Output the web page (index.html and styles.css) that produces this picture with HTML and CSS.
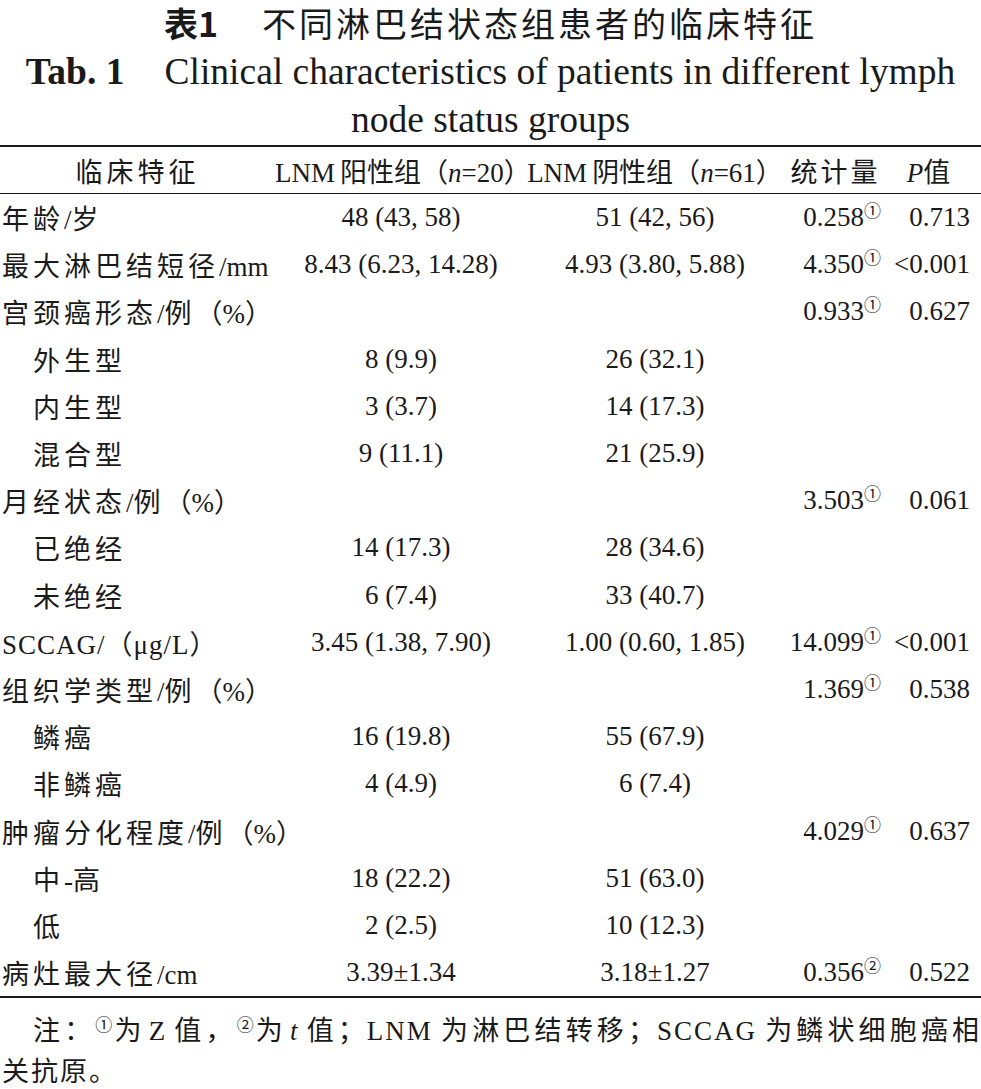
FILE: index.html
```html
<!DOCTYPE html>
<html lang="zh">
<head>
<meta charset="utf-8">
<title>表1 不同淋巴结状态组患者的临床特征</title>
<link rel="stylesheet" href="styles.css">
</head>
<body>
<div class="page">
  <div class="title-cn"><span class="tno">表1</span><span class="tcn">不同淋巴结状态组患者的临床特征</span></div>
  <div class="title-en"><b>Tab. 1</b><span class="ten">Clinical characteristics of patients in different lymph<br>node status groups</span></div>
  <table class="data">
    <colgroup>
      <col class="c1"><col class="c2"><col class="c3"><col class="c4"><col class="c5">
    </colgroup>
    <thead>
      <tr>
        <th class="h1">临床特征</th>
        <th class="hg"><span class="lt">LNM</span>阳性组（<i>n</i>=20）</th>
        <th class="hg"><span class="lt">LNM</span>阴性组（<i>n</i>=61）</th>
        <th class="hs">统计量</th>
        <th class="hp"><i>P</i>值</th>
      </tr>
    </thead>
    <tbody>
      <tr><td>年龄<span class="lt">/</span>岁</td><td>48 (43, 58)</td><td>51 (42, 56)</td><td>0.258<sup>①</sup></td><td>0.713</td></tr>
      <tr><td>最大淋巴结短径<span class="lt">/mm</span></td><td>8.43 (6.23, 14.28)</td><td>4.93 (3.80, 5.88)</td><td>4.350<sup>①</sup></td><td>&lt;0.001</td></tr>
      <tr><td>宫颈癌形态<span class="lt">/</span>例<span class="lt">（%）</span></td><td></td><td></td><td>0.933<sup>①</sup></td><td>0.627</td></tr>
      <tr><td class="sub">外生型</td><td>8 (9.9)</td><td>26 (32.1)</td><td></td><td></td></tr>
      <tr><td class="sub">内生型</td><td>3 (3.7)</td><td>14 (17.3)</td><td></td><td></td></tr>
      <tr><td class="sub">混合型</td><td>9 (11.1)</td><td>21 (25.9)</td><td></td><td></td></tr>
      <tr><td>月经状态<span class="lt">/</span>例<span class="lt">（%）</span></td><td></td><td></td><td>3.503<sup>①</sup></td><td>0.061</td></tr>
      <tr><td class="sub">已绝经</td><td>14 (17.3)</td><td>28 (34.6)</td><td></td><td></td></tr>
      <tr><td class="sub">未绝经</td><td>6 (7.4)</td><td>33 (40.7)</td><td></td><td></td></tr>
      <tr><td><span class="lt wide">SCCAG/（μg/L）</span></td><td>3.45 (1.38, 7.90)</td><td>1.00 (0.60, 1.85)</td><td>14.099<sup>①</sup></td><td>&lt;0.001</td></tr>
      <tr><td>组织学类型<span class="lt">/</span>例<span class="lt">（%）</span></td><td></td><td></td><td>1.369<sup>①</sup></td><td>0.538</td></tr>
      <tr><td class="sub">鳞癌</td><td>16 (19.8)</td><td>55 (67.9)</td><td></td><td></td></tr>
      <tr><td class="sub">非鳞癌</td><td>4 (4.9)</td><td>6 (7.4)</td><td></td><td></td></tr>
      <tr><td>肿瘤分化程度<span class="lt">/</span>例<span class="lt">（%）</span></td><td></td><td></td><td>4.029<sup>①</sup></td><td>0.637</td></tr>
      <tr><td class="sub">中<span class="lt">-</span>高</td><td>18 (22.2)</td><td>51 (63.0)</td><td></td><td></td></tr>
      <tr><td class="sub">低</td><td>2 (2.5)</td><td>10 (12.3)</td><td></td><td></td></tr>
      <tr><td>病灶最大径<span class="lt">/cm</span></td><td>3.39±1.34</td><td>3.18±1.27</td><td>0.356<sup>②</sup></td><td>0.522</td></tr>
    </tbody>
  </table>
  <div class="note">
    <div class="note1">注：<sup>①</sup>为<span class="gap z">Z</span>值，<sup>②</sup>为<i class="gap">t</i>值；<span class="gr">LNM</span>为淋巴结转移；<span class="gr">SCCAG</span>为鳞状细胞癌相</div>
    <div class="note2">关抗原。</div>
  </div>
</div>
</body>
</html>
```

FILE: styles.css
```css
html, body {
  margin: 0;
  padding: 0;
  background: #fff;
}
body {
  color: #1a1a1a;
  font-family: "Liberation Serif", "Noto Sans CJK SC", serif;
  font-size: 27px;
}
.page {
  width: 981px;
}
.title-cn {
  height: 48px;
  line-height: 46px;
  text-align: center;
  font-size: 34px;
  font-family: "Noto Sans CJK SC", sans-serif;
}
.tno {
  font-weight: 700;
  margin-right: 44px;
}
.tcn {
  letter-spacing: 3px;
}
.title-en {
  font-size: 37.5px;
  line-height: 48px;
  text-align: center;
  white-space: nowrap;
}
.title-en b {
  margin-right: 40px;
}
.data {
  width: 981px;
  table-layout: fixed;
  border-collapse: collapse;
  margin-top: 1px;
  border-top: 2px solid #1a1a1a;
  border-bottom: 2px solid #1a1a1a;
}
.c1 { width: 275px; }
.c2 { width: 252px; }
.c3 { width: 256px; }
.c4 { width: 101px; }
.c5 { width: 97px; }
.data th {
  font-weight: normal;
  height: 46px;
  padding: 0;
  white-space: nowrap;
  text-align: center;
  border-bottom: 1px solid #1a1a1a;
}
.data th.h1 {
  letter-spacing: 4px;
}
.data th.hg .lt {
  margin-right: 5px;
}
.data th.hs {
  letter-spacing: 3px;
  padding-left: 4px;
}
.data th.hp {
  padding-right: 8px;
}
.data td {
  height: 47.2px;
  padding: 0;
  white-space: nowrap;
  text-align: center;
  vertical-align: middle;
}
.data td:first-child {
  text-align: left;
  padding-left: 2px;
  letter-spacing: 4px;
}
.data td.sub {
  padding-left: 33px;
}
.lt {
  letter-spacing: 0;
}
.lt.wide {
  letter-spacing: 1px;
}
.data td:nth-child(4) {
  text-align: right;
  padding-right: 3px;
}
.data td:nth-child(5) {
  text-align: right;
  padding-right: 11px;
}
sup {
  font-size: 17px;
  line-height: 0;
  vertical-align: 9px;
  letter-spacing: 0;
}
.note {
  margin-top: 13px;
  font-size: 27px;
  line-height: 41px;
}
.note1 {
  padding-left: 33px;
  letter-spacing: 2px;
  text-align: justify;
  text-align-last: justify;
  white-space: nowrap;
}
.note2 {
  letter-spacing: 2px;
  padding-left: 2px;
}
.gap {
  margin: 0 5px 0 3px;
}
.z {
  font-style: normal;
}
.gr {
  margin-right: 6px;
}
```
